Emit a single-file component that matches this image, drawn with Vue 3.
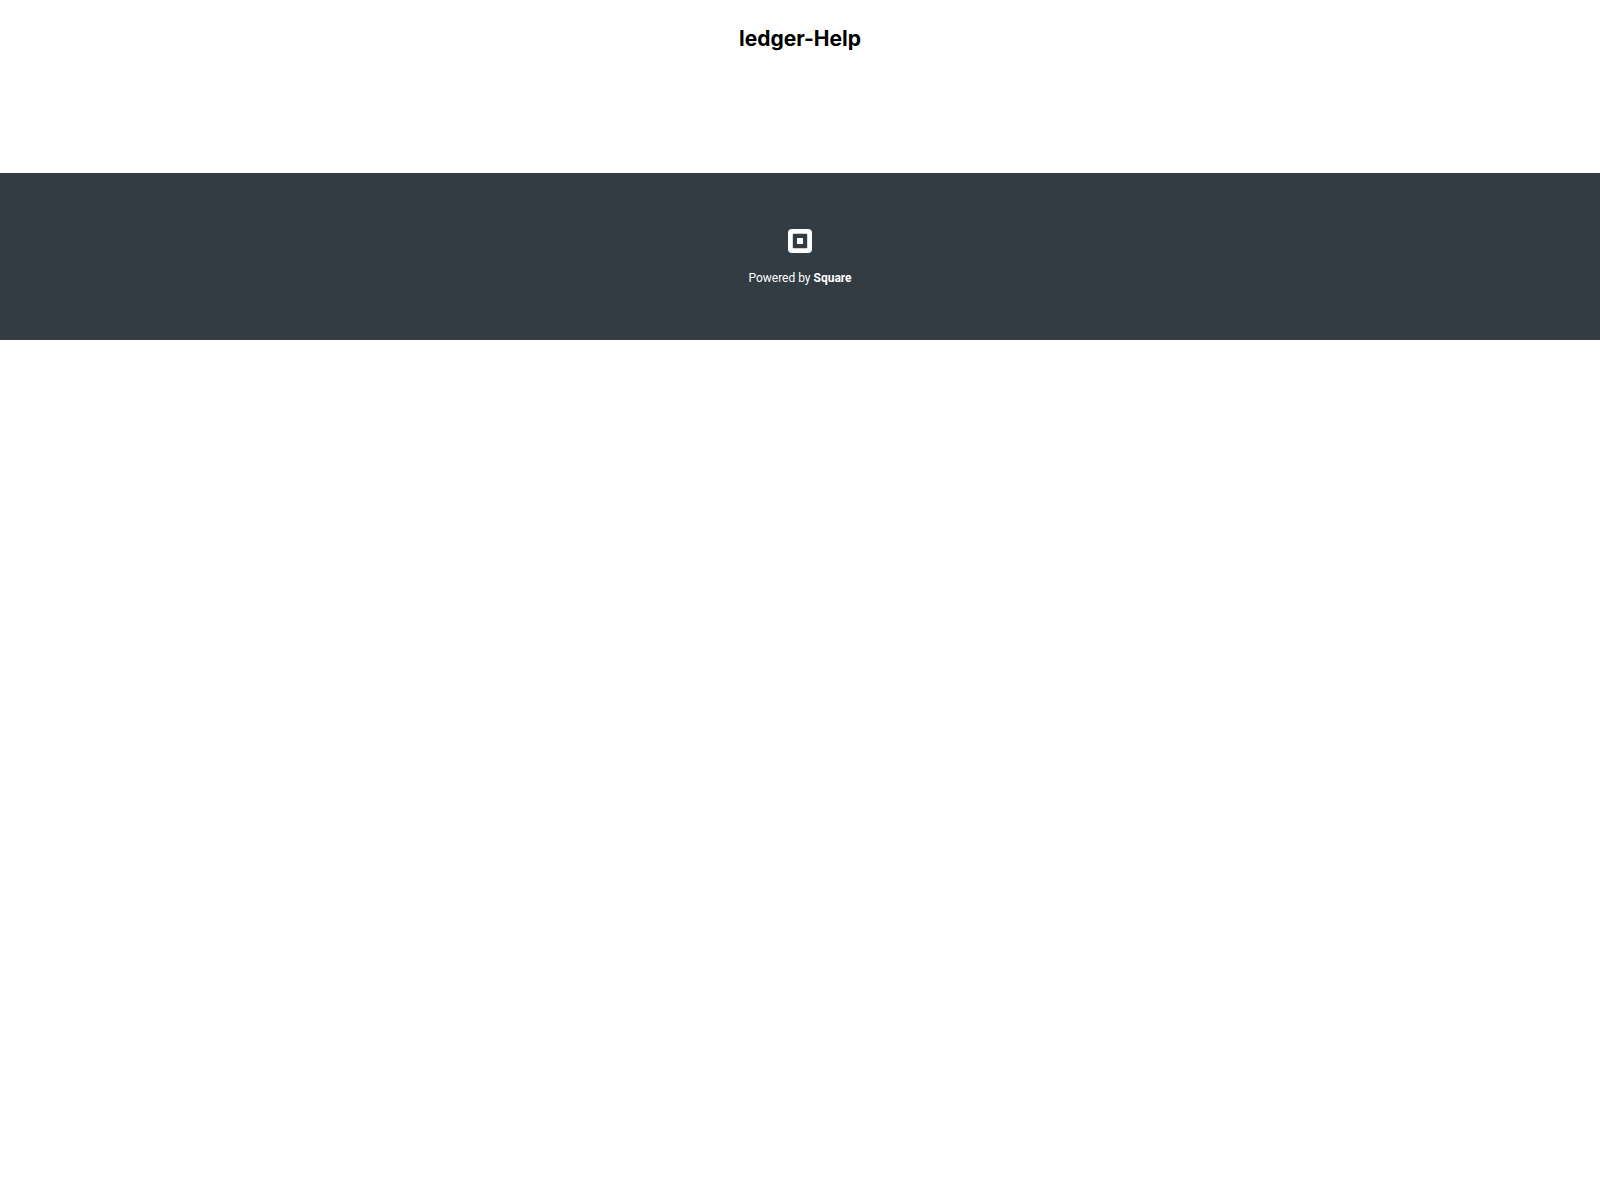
<script setup>
const siteName = 'ledger-Help'
</script>

<template>
  <div class="page">
    <header class="header">
      <h1 class="title"><a href="#">{{ siteName }}</a></h1>
    </header>
    <footer class="footer">
      <a class="powered" href="#">
        <svg class="logo" viewBox="0 0 24 24" aria-hidden="true">
          <path
            fill="currentColor"
            fill-rule="evenodd"
            d="M4 0h16a4 4 0 0 1 4 4v16a4 4 0 0 1-4 4H4a4 4 0 0 1-4-4V4a4 4 0 0 1 4-4zM5.5 4.8a.7.7 0 0 0-.7.7v13a.7.7 0 0 0 .7.7h13a.7.7 0 0 0 .7-.7v-13a.7.7 0 0 0-.7-.7zM9.5 9h5a.5.5 0 0 1 .5.5v5a.5.5 0 0 1-.5.5h-5a.5.5 0 0 1-.5-.5v-5a.5.5 0 0 1 .5-.5z"
          />
        </svg>
        <span>Powered by <strong>Square</strong></span>
      </a>
    </footer>
  </div>
</template>

<style scoped>
.header {
  display: flex;
  justify-content: center;
  padding: 24px 24px 119px;
}
.title {
  margin: 0;
  font: 700 21px/30px Inter, sans-serif;
}
.title a {
  color: #000;
  text-decoration: none;
}
.footer {
  display: flex;
  justify-content: center;
  padding: 56px 24px 53px;
  background: #333b43;
}
.powered {
  display: flex;
  flex-direction: column;
  align-items: center;
  gap: 16px;
  color: #fff;
  font: 400 12px/18px Roboto, sans-serif;
  text-decoration: none;
}
.logo {
  width: 24px;
  height: 24px;
}
.powered strong {
  font-weight: 700;
}
</style>

<style>
body {
  background: #fff;
}
</style>
